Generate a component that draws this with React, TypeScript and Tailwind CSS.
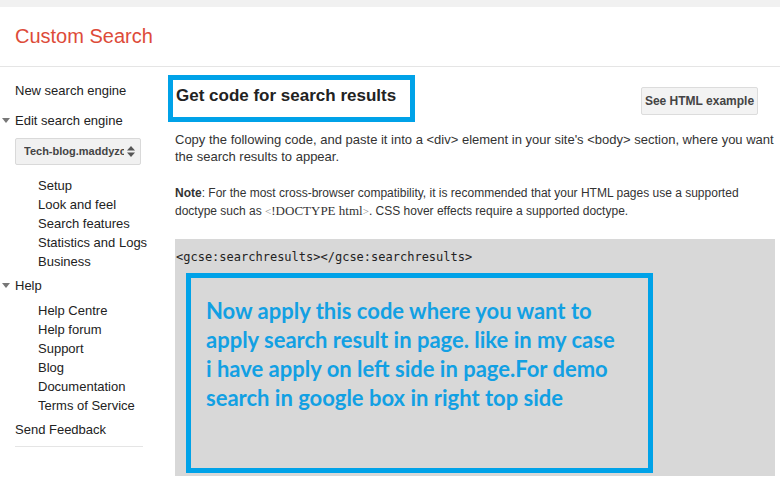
import React from 'react';

const Caret = () => (
  <svg width="8" height="5" viewBox="0 0 8 5" className="absolute left-[2px] top-[7px]">
    <path d="M0 0 L8 0 L4 5 Z" fill="#777" />
  </svg>
);

const App: React.FC = () => {
  const engineLinks = ['Setup', 'Look and feel', 'Search features', 'Statistics and Logs', 'Business'];
  const helpLinks = ['Help Centre', 'Help forum', 'Support', 'Blog', 'Documentation', 'Terms of Service'];

  return (
    <div className="w-[780px] h-[487px] bg-white overflow-hidden font-['Liberation_Sans',Arial,sans-serif] text-[13px] text-[#222]">
      {/* Top strip + header */}
      <div className="h-[7px] bg-[#f1f1f1]" />
      <div className="h-[60px] border-b border-[#e5e5e5] pl-[15px] pt-[17px]">
        <span className="text-[20px] leading-[24px] text-[#dd4b39]">Custom Search</span>
      </div>

      <div className="flex">
        {/* Sidebar */}
        <div className="w-[175px] shrink-0 pl-[15px] pt-[14px]">
          <div className="h-[19px] leading-[19px]">New search engine</div>
          <div className="relative mt-[11px] h-[19px] leading-[19px] -ml-[15px] pl-[15px]">
            <Caret />
            Edit search engine
          </div>
          <div className="mt-[8px] w-[126px] h-[27px] bg-[#f1f1f1] border border-[#d9d9d9] rounded-[2px] flex items-center pl-[8px] pr-[5px]">
            <span className="text-[11px] font-bold text-[#444] whitespace-nowrap overflow-hidden w-[100px]">Tech-blog.maddyzone</span>
            <svg width="8" height="11" viewBox="0 0 8 11" className="ml-auto">
              <path d="M0 4.5 L8 4.5 L4 0 Z" fill="#555" />
              <path d="M0 6.5 L8 6.5 L4 11 Z" fill="#555" />
            </svg>
          </div>
          <div className="mt-[11px] pl-[23px]">
            {engineLinks.map((l) => (
              <div key={l} className="h-[19px] leading-[19px] whitespace-nowrap">{l}</div>
            ))}
          </div>
          <div className="relative mt-[5px] h-[19px] leading-[19px] -ml-[15px] pl-[15px]">
            <Caret />
            Help
          </div>
          <div className="mt-[6px] pl-[23px]">
            {helpLinks.map((l) => (
              <div key={l} className="h-[19px] leading-[19px] whitespace-nowrap">{l}</div>
            ))}
          </div>
          <div className="mt-[5px] h-[19px] leading-[19px]">Send Feedback</div>
          <div className="mt-[7px] w-[128px] border-t border-[#e5e5e5]" />
        </div>

        {/* Main */}
        <div className="w-[600px] shrink-0">
          <div className="flex items-start">
            <h2 className="mt-[8px] -ml-[7px] w-[247px] h-[47px] border-[5px] border-[#00a2e8] pl-[3px] pt-[6px] text-[17px] leading-[20px] font-bold text-[#222] whitespace-nowrap">
              Get code for search results
            </h2>
            <button className="ml-auto mr-[17px] mt-[20px] w-[117px] h-[28px] bg-[#f3f3f3] border border-[#dcdcdc] rounded-[2px] text-[12px] font-bold text-[#444]">
              See HTML example
            </button>
          </div>
          <p className="mt-[9px] leading-[17px] text-[#333] whitespace-nowrap">
            Copy the following code, and paste it into a &lt;div&gt; element in your site's &lt;body&gt; section, where you want
            <br />
            the search results to appear.
          </p>
          <p className="mt-[20px] text-[12px] leading-[17px] text-[#333] whitespace-nowrap">
            <span className="font-bold">Note</span>: For the most cross-browser compatibility, it is recommended that your HTML pages use a supported
            <br />
            doctype such as <span className="font-['Liberation_Serif',serif] text-[13px]"><span className="text-[#888] text-[11px]">&lt;</span>!DOCTYPE html<span className="text-[#888] text-[11px]">&gt;</span></span>. CSS hover effects require a supported doctype.
          </p>
          <div className="mt-[19px] h-[237px] bg-[#d8d8d8] pt-[10px]">
            <div className="font-['DejaVu_Sans_Mono',monospace] text-[12px] leading-[16px] text-[#222] pl-[1px]">
              &lt;gcse:searchresults&gt;&lt;/gcse:searchresults&gt;
            </div>
            <div className="ml-[11px] mt-[8px] w-[467px] h-[200px] border-[5px] border-[#00a2e8] pl-[15px] pt-[18px] font-['Lato',sans-serif] font-bold text-[22px] leading-[29px] text-[#12a0e3] whitespace-nowrap">
              Now apply this code where you want to
              <br />
              apply search result in page. like in my case
              <br />
              i have apply on left side in page.For demo
              <br />
              search in google box in right top side
            </div>
          </div>
        </div>
      </div>
    </div>
  );
};

export default App;
